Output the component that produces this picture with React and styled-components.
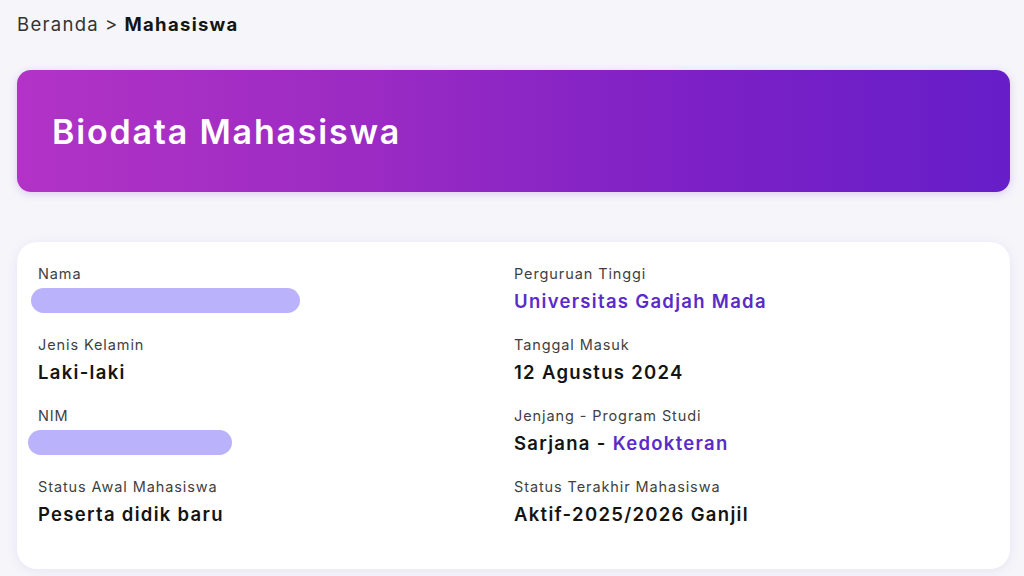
import React from "react";
import styled, { createGlobalStyle } from "styled-components";

const Global = createGlobalStyle`
  html, body { margin: 0; padding: 0; background: #f5f5fa; }
  body { font-family: Inter, "Noto Sans", sans-serif; color: #1a1a1a; }
  * { box-sizing: border-box; }
`;

const Page = styled.div`
  width: 1024px;
  min-height: 576px;
  padding: 12px 14px 0 17px;
  display: flex;
  flex-direction: column;
`;

const Breadcrumb = styled.nav`
  font-size: 18.5px;
  line-height: 24px;
  letter-spacing: 1.3px;
  color: #2a2a2a;
  display: flex;
  gap: 6px;
  align-items: center;
`;

const Crumb = styled.span`
  font-weight: ${(p) => (p.$current ? 700 : 400)};
  color: ${(p) => (p.$current ? "#151515" : "#333")};
`;

const Banner = styled.header`
  margin-top: 34px;
  height: 122px;
  border-radius: 14px;
  background: linear-gradient(90deg, #b233c6 0%, #9b2bc3 35%, #7b20c6 70%, #661ec8 100%);
  box-shadow: 0 2px 8px rgba(120, 40, 200, 0.2);
  display: flex;
  align-items: center;
  padding-left: 35px;
`;

const Title = styled.h1`
  margin: 0;
  color: #fff;
  font-size: 34px;
  font-weight: 600;
  letter-spacing: 1.8px;
`;

const Card = styled.section`
  margin-top: 50px;
  height: 327px;
  background: #fff;
  border-radius: 20px;
  box-shadow: 0 2px 12px rgba(120, 100, 200, 0.1);
  display: grid;
  grid-template-columns: 476px 1fr;
  padding: 23px 0 0 21px;
`;

const Column = styled.div`
  display: flex;
  flex-direction: column;
  gap: 20px;
`;

const Field = styled.div`
  display: flex;
  flex-direction: column;
  gap: 5px;
  height: 51px;
`;

const Label = styled.span`
  font-size: 14.5px;
  line-height: 18px;
  letter-spacing: 0.9px;
  color: #3f3f3f;
`;

const Value = styled.span`
  font-size: 18.5px;
  line-height: 26px;
  letter-spacing: 1.3px;
  font-weight: 600;
  color: ${(p) => (p.$accent ? "#5a2bc9" : "#141414")};
`;

const Accent = styled.span`
  color: #5a2bc9;
`;

const Redacted = styled.span`
  display: block;
  height: 25px;
  width: ${(p) => p.$w}px;
  margin-left: ${(p) => p.$ml}px;
  border-radius: 13px;
  background: #bab3fb;
`;

export default function App() {
  return (
    <>
      <Global />
      <Page>
        <Breadcrumb>
          <Crumb>Beranda</Crumb>
          <Crumb>&gt;</Crumb>
          <Crumb $current>Mahasiswa</Crumb>
        </Breadcrumb>
        <Banner>
          <Title>Biodata Mahasiswa</Title>
        </Banner>
        <Card>
          <Column>
            <Field>
              <Label>Nama</Label>
              <Redacted $w={269} $ml={-7} />
            </Field>
            <Field>
              <Label>Jenis Kelamin</Label>
              <Value>Laki-laki</Value>
            </Field>
            <Field>
              <Label>NIM</Label>
              <Redacted $w={204} $ml={-10} />
            </Field>
            <Field>
              <Label>Status Awal Mahasiswa</Label>
              <Value>Peserta didik baru</Value>
            </Field>
          </Column>
          <Column>
            <Field>
              <Label>Perguruan Tinggi</Label>
              <Value $accent>Universitas Gadjah Mada</Value>
            </Field>
            <Field>
              <Label>Tanggal Masuk</Label>
              <Value>12 Agustus 2024</Value>
            </Field>
            <Field>
              <Label>Jenjang - Program Studi</Label>
              <Value>
                Sarjana - <Accent>Kedokteran</Accent>
              </Value>
            </Field>
            <Field>
              <Label>Status Terakhir Mahasiswa</Label>
              <Value>Aktif-2025/2026 Ganjil</Value>
            </Field>
          </Column>
        </Card>
      </Page>
    </>
  );
}
